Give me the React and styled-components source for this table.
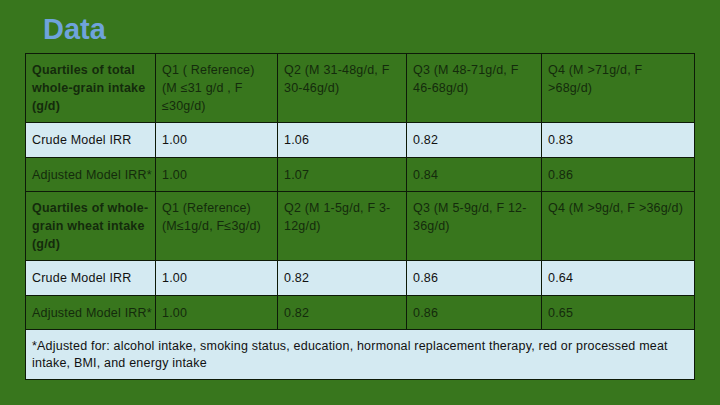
import React from "react";
import styled, { createGlobalStyle } from "styled-components";

const Global = createGlobalStyle`
  html, body { margin: 0; padding: 0; }
  body {
    background: #38761d;
    width: 720px;
    height: 405px;
    overflow: hidden;
    font-family: "Liberation Sans", Arial, sans-serif;
  }
`;

const Slide = styled.div`
  width: 720px;
  height: 405px;
  background: #38761d;
  display: flex;
  flex-direction: column;
  padding: 9px 0 0 25px;
  box-sizing: border-box;
`;

const Title = styled.h1`
  margin: 0 0 0 18px;
  font-family: "Liberation Sans", Arial, sans-serif;
  font-weight: bold;
  font-size: 29px;
  line-height: 40px;
  height: 44px;
  color: #6fa3db;
`;

const Table = styled.table`
  border-collapse: collapse;
  width: 669px;
  table-layout: fixed;
  font-size: 12.5px;
  color: #111;
  letter-spacing: 0.2px;
`;

const Row = styled.tr`
  background: ${(p) => (p.$light ? "#d4eaf2" : "#38761d")};
  height: ${(p) => p.$h}px;
`;

const Cell = styled.td`
  border: 1px solid #0d1a08;
  padding: ${(p) => (p.$tall ? "7px 5px 0 6px" : "0 5px 0 6px")};
  vertical-align: ${(p) => (p.$tall ? "top" : "middle")};
  line-height: 18px;
  font-weight: ${(p) => (p.$bold ? "bold" : "normal")};
  color: ${(p) => (p.$light ? "#111" : "#142b0c")};
  white-space: ${(p) => (p.$nowrap ? "nowrap" : "normal")};
  overflow: visible;
`;

const Note = styled.td`
  border: 1px solid #0d1a08;
  padding: 0 6px;
  line-height: 17px;
  vertical-align: middle;
`;

const widths = [130, 122, 129, 135, 153];

const sections = [
  {
    head: [
      "Quartiles of total whole-grain intake (g/d)",
      "Q1 ( Reference) (M \u226431 g/d , F \u226430g/d)",
      "Q2 (M 31-48g/d, F 30-46g/d)",
      "Q3 (M 48-71g/d, F 46-68g/d)",
      "Q4 (M >71g/d, F >68g/d)",
    ],
    crude: ["1.00", "1.06", "0.82", "0.83"],
    adj: ["1.00", "1.07", "0.84", "0.86"],
  },
  {
    head: [
      "Quartiles of whole-grain wheat intake (g/d)",
      "Q1 (Reference) (M\u22641g/d, F\u22643g/d)",
      "Q2 (M 1-5g/d, F 3-12g/d)",
      "Q3 (M 5-9g/d, F 12-36g/d)",
      "Q4 (M >9g/d, F >36g/d)",
    ],
    crude: ["1.00", "0.82", "0.86", "0.64"],
    adj: ["1.00", "0.82", "0.86", "0.65"],
  },
];

export default function App() {
  return (
    <>
      <Global />
      <Slide>
        <Title>Data</Title>
        <Table>
          <colgroup>
            {widths.map((w, i) => (
              <col key={i} style={{ width: w }} />
            ))}
          </colgroup>
          <tbody>
            {sections.map((s, si) => (
              <React.Fragment key={si}>
                <Row $h={69}>
                  {s.head.map((t, i) => (
                    <Cell key={i} $tall $bold={i === 0}>
                      {t}
                    </Cell>
                  ))}
                </Row>
                <Row $h={35} $light>
                  <Cell $light $nowrap>Crude Model IRR</Cell>
                  {s.crude.map((v, i) => (
                    <Cell key={i} $light>
                      {v}
                    </Cell>
                  ))}
                </Row>
                <Row $h={34}>
                  <Cell $nowrap>Adjusted Model IRR*</Cell>
                  {s.adj.map((v, i) => (
                    <Cell key={i}>{v}</Cell>
                  ))}
                </Row>
              </React.Fragment>
            ))}
            <Row $h={50} $light>
              <Note colSpan={5}>
                *Adjusted for: alcohol intake, smoking status, education, hormonal
                replacement therapy, red or processed meat intake, BMI, and energy
                intake
              </Note>
            </Row>
          </tbody>
        </Table>
      </Slide>
    </>
  );
}
